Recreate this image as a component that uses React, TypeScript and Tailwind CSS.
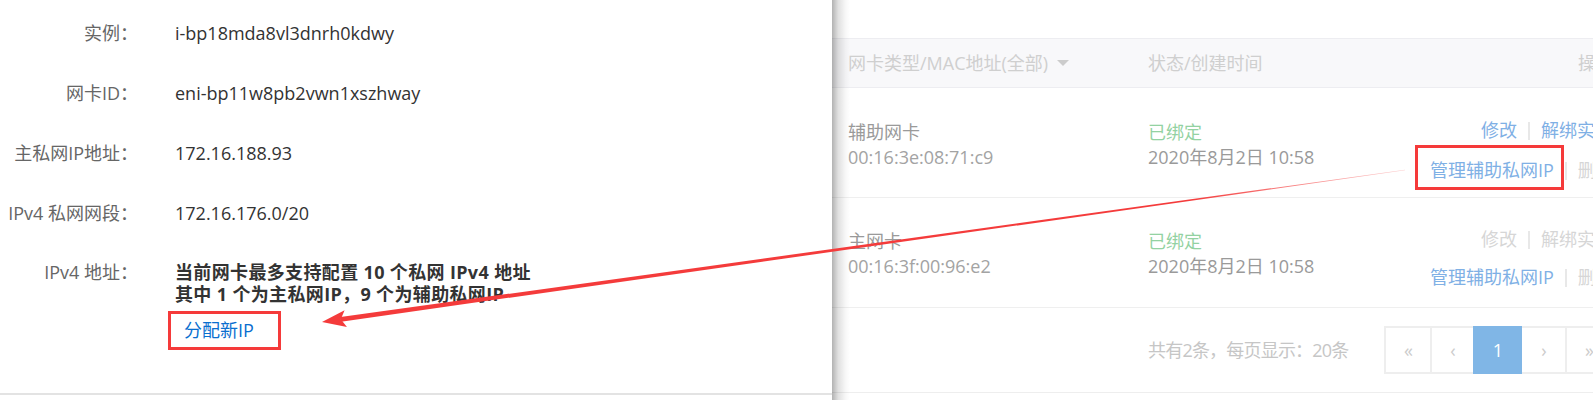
import React from "react";

function Row({ label, value }: { label: string; value: React.ReactNode }) {
  return (
    <div className="flex">
      <div className="w-[138px] shrink-0 text-right text-[#666666]">{label}</div>
      <div className="ml-[37px] text-[#333333]">{value}</div>
    </div>
  );
}

function Sep() {
  return <span className="inline-block w-[2px] h-[18px] bg-[#e8e8e8] mx-[11px] align-[-3px]" />;
}

export default function App() {
  // arrow geometry
  const tip = { x: 322, y: 322 };
  const start = { x: 1405, y: 170 };
  const dx = start.x - tip.x;
  const dy = start.y - tip.y;
  const len = Math.sqrt(dx * dx + dy * dy);
  const ux = dx / len;
  const uy = dy / len;
  const nx = -uy;
  const ny = ux;
  const headLen = 24;
  const headHalf = 8.5;
  const bx = tip.x + ux * headLen;
  const by = tip.y + uy * headLen;
  const nbx = tip.x + ux * (headLen - 5);
  const nby = tip.y + uy * (headLen - 5);
  const thick = 2.3;
  const thin = 0.3;
  const linePts = [
    [nbx + nx * thick, nby + ny * thick],
    [start.x + nx * thin, start.y + ny * thin],
    [start.x - nx * thin, start.y - ny * thin],
    [nbx - nx * thick, nby - ny * thick],
  ]
    .map((p) => p.join(","))
    .join(" ");
  const headPts = [
    [tip.x, tip.y],
    [bx + nx * headHalf, by + ny * headHalf],
    [nbx, nby],
    [bx - nx * headHalf, by - ny * headHalf],
  ]
    .map((p) => p.join(","))
    .join(" ");

  return (
    <div className="relative flex w-[1593px] h-[400px] overflow-hidden bg-white font-['Open_Sans','Noto_Sans_CJK_SC',sans-serif] text-[18px] leading-[24px]">
      {/* Left drawer */}
      <div className="relative z-10 w-[832px] shrink-0 h-full bg-white">
        <div className="flex flex-col gap-[36px] pt-[21px] h-[395px] border-b-2 border-[#e3e3e3]">
          <Row label="实例：" value="i-bp18mda8vl3dnrh0kdwy" />
          <Row label="网卡ID：" value="eni-bp11w8pb2vwn1xszhway" />
          <Row label="主私网IP地址：" value="172.16.188.93" />
          <Row label="IPv4 私网网段：" value="172.16.176.0/20" />
          <div className="flex">
            <div className="w-[138px] shrink-0 text-right text-[#666666] leading-[22px]">IPv4 地址：</div>
            <div className="ml-[37px]">
              <div className="font-bold text-[#333333] leading-[22px] tracking-[0.35px]">
                <div>当前网卡最多支持配置 10 个私网 IPv4 地址</div>
                <div>其中 1 个为主私网IP，9 个为辅助私网IP</div>
              </div>
              <div className="mt-[13px] ml-[9px]">
                <span className="relative text-[#0a6fcf]">
                  分配新IP
                  <span className="absolute -left-[16px] -right-[27px] -top-[7px] -bottom-[8px] border-[3px] border-[#f53a3a]" />
                </span>
              </div>
            </div>
          </div>
        </div>
        <div className="absolute left-full top-0 h-full w-[18px] bg-[linear-gradient(to_right,rgba(0,0,0,0.3),rgba(0,0,0,0.12)_35%,rgba(0,0,0,0.03)_75%,rgba(0,0,0,0))]" />
      </div>

      {/* Right table (behind) */}
      <div className="flex-1 h-full whitespace-nowrap">
        <div className="h-[38px]" />
        <div className="flex items-center h-[50px] pl-[16px] bg-[#f8f8fa] border-y border-[#ededf1] text-[#cfcfcf]">
          <div className="flex items-center w-[300px] shrink-0">
            网卡类型/MAC地址(全部)
            <span className="ml-[9px] w-0 h-0 border-x-[6px] border-x-transparent border-t-[6px] border-t-[#cccccc]" />
          </div>
          <div className="w-[430px] shrink-0">状态/创建时间</div>
          <div>操作</div>
        </div>

        {/* Row 1 */}
        <div className="flex items-start h-[110px] pl-[16px] border-b border-[#efefef]">
          <div className="w-[300px] shrink-0 pt-[32px] leading-[25px] text-[#9a9a9a]">
            <div>辅助网卡</div>
            <div className="text-[#a3a3a3]">00:16:3e:08:71:c9</div>
          </div>
          <div className="w-[282px] shrink-0 pt-[32px] leading-[25px]">
            <div className="text-[#93d2a2]">已绑定</div>
            <div className="text-[#9a9a9a]">2020年8月2日 10:58</div>
          </div>
          <div className="flex flex-col gap-[16px] pt-[30px]">
            <div className="pl-[51px]">
              <span className="text-[#7fb0e5]">修改</span>
              <Sep />
              <span className="text-[#7fb0e5]">解绑实例</span>
            </div>
            <div>
              <span className="relative text-[#7fb0e5]">
                管理辅助私网IP
                <span className="absolute -left-[15px] -right-[10px] -top-[13px] -bottom-[8px] border-[3px] border-[#f53a3a]" />
              </span>
              <Sep />
              <span className="text-[#d6d6d6]">删除</span>
            </div>
          </div>
        </div>

        {/* Row 2 */}
        <div className="flex items-start h-[110px] pl-[16px] border-b border-[#efefef]">
          <div className="w-[300px] shrink-0 pt-[31px] leading-[25px]">
            <div className="text-[#9a9a9a]">主网卡</div>
            <div className="text-[#a3a3a3]">00:16:3f:00:96:e2</div>
          </div>
          <div className="w-[282px] shrink-0 pt-[31px] leading-[25px]">
            <div className="text-[#93d2a2]">已绑定</div>
            <div className="text-[#9a9a9a]">2020年8月2日 10:58</div>
          </div>
          <div className="flex flex-col gap-[14px] pt-[29px]">
            <div className="pl-[51px]">
              <span className="text-[#d6d6d6]">修改</span>
              <Sep />
              <span className="text-[#d6d6d6]">解绑实例</span>
            </div>
            <div>
              <span className="text-[#7fb0e5]">管理辅助私网IP</span>
              <Sep />
              <span className="text-[#d6d6d6]">删除</span>
            </div>
          </div>
        </div>

        {/* Pagination */}
        <div className="flex items-center h-[85px] pl-[316px] border-b border-[#eeeeee]">
          <span className="text-[#c6c6c6] tracking-[-0.8px]">共有2条，每页显示：20条</span>
          <div className="flex ml-[36px] h-[48px] text-[#cccccc]">
            <div className="flex items-center justify-center w-[48px] h-full border-2 border-[#eeeeee]">«</div>
            <div className="flex items-center justify-center w-[45px] h-full -ml-[2px] border-2 border-[#eeeeee]">‹</div>
            <div className="relative z-10 flex items-center justify-center w-[49px] h-full -ml-[2px] bg-[#80b6e6] text-white">1</div>
            <div className="flex items-center justify-center w-[47px] h-full -ml-[2px] border-2 border-[#eeeeee]">›</div>
            <div className="flex items-center justify-center w-[48px] h-full -ml-[2px] border-2 border-[#eeeeee]">»</div>
          </div>
        </div>
      </div>

      {/* Annotation arrow */}
      <svg className="absolute left-0 top-0 z-20 pointer-events-none" width="1593" height="400" viewBox="0 0 1593 400">
        <defs>
          <linearGradient id="fade" gradientUnits="userSpaceOnUse" x1={tip.x} y1={tip.y} x2={start.x} y2={start.y}>
            <stop offset="0" stopColor="#f43b3b" stopOpacity="1" />
            <stop offset="0.8" stopColor="#f43b3b" stopOpacity="1" />
            <stop offset="1" stopColor="#f43b3b" stopOpacity="0.25" />
          </linearGradient>
        </defs>
        <polygon points={linePts} fill="url(#fade)" />
        <polygon points={headPts} fill="#f43b3b" />
      </svg>
    </div>
  );
}
